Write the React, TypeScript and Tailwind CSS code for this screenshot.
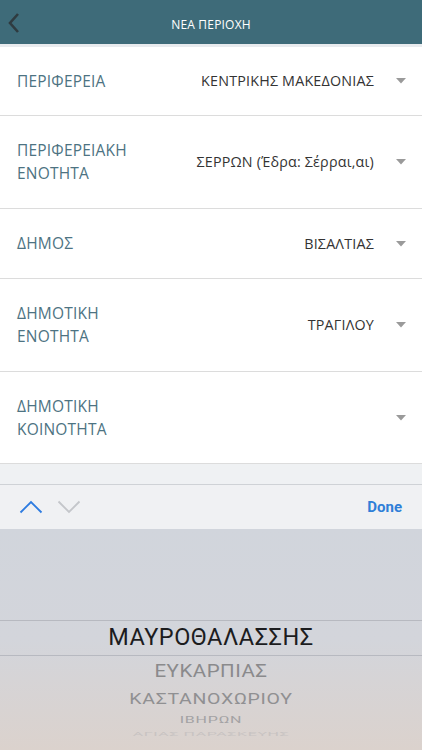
import React from 'react';

type Row = { label: string[]; value?: string; h: string };

const rows: Row[] = [
  { label: ['ΠΕΡΙΦΕΡΕΙΑ'], value: 'ΚΕΝΤΡΙΚΗΣ ΜΑΚΕΔΟΝΙΑΣ', h: 'h-[69px]' },
  { label: ['ΠΕΡΙΦΕΡΕΙΑΚΗ', 'ΕΝΟΤΗΤΑ'], value: 'ΣΕΡΡΩΝ (Έδρα: Σέρραι,αι)', h: 'h-[93px]' },
  { label: ['ΔΗΜΟΣ'], value: 'ΒΙΣΑΛΤΙΑΣ', h: 'h-[70px]' },
  { label: ['ΔΗΜΟΤΙΚΗ', 'ΕΝΟΤΗΤΑ'], value: 'ΤΡΑΓΙΛΟΥ', h: 'h-[93px]' },
  { label: ['ΔΗΜΟΤΙΚΗ', 'ΚΟΙΝΟΤΗΤΑ'], h: 'h-[92px]' },
];

const Caret = () => (
  <svg width="10" height="6" viewBox="0 0 10 6" className="shrink-0">
    <path d="M0 0 H10 L5 5.5 Z" fill="#9a9a9a" />
  </svg>
);

export default function App() {
  return (
    <div className="w-[422px] h-[750px] flex flex-col overflow-hidden bg-white font-['Open_Sans',sans-serif]">
      {/* header */}
      <div className="h-[44px] shrink-0 bg-[#3e6b79] flex items-center relative">
        <svg width="14" height="22" viewBox="0 0 14 22" className="absolute left-[7px] top-[12px]">
          <path d="M11 2 L3 11 L11 20" fill="none" stroke="#2f3b40" strokeWidth="2.6" />
        </svg>
        <div className="flex-1 text-center text-white text-[12px] font-medium tracking-[0.2px] pt-[6px]">
          ΝΕΑ ΠΕΡΙΟΧΗ
        </div>
      </div>
      <div className="h-[3px] shrink-0 bg-[#e8ebee]" />

      {/* form rows */}
      <div className="flex flex-col shrink-0">
        {rows.map((r, i) => (
          <div
            key={i}
            className={`${r.h} shrink-0 flex items-center pl-[17px] pr-[16px] border-b border-[#dcdcdc]`}
          >
            <div className="flex-1 text-[15.5px] leading-[23px] text-[#4d7382] tracking-[0.2px]">
              {r.label.map((l, j) => (
                <div key={j}>{l}</div>
              ))}
            </div>
            {r.value && (
              <div className="text-[14.3px] text-[#333333] mr-[22px] tracking-[0.2px]">{r.value}</div>
            )}
            <Caret />
          </div>
        ))}
      </div>

      <div className="h-[20px] shrink-0 bg-[#eff1f3]" />

      {/* toolbar */}
      <div className="h-[45px] shrink-0 bg-[#f0f1f3] border-t border-[#cfd2d6] flex items-center px-[19px]">
        <svg width="24" height="14" viewBox="0 0 24 14">
          <path d="M1.5 12.5 L12 2 L22.5 12.5" fill="none" stroke="#2d7be0" strokeWidth="1.8" />
        </svg>
        <svg width="24" height="14" viewBox="0 0 24 14" className="ml-[14px]">
          <path d="M1.5 1.5 L12 12 L22.5 1.5" fill="none" stroke="#c4c6ca" strokeWidth="1.8" />
        </svg>
        <div className="flex-1" />
        <div className="text-[15px] font-bold text-[#2f7fd8] mr-[1px] font-['Roboto',sans-serif]">Done</div>
      </div>

      {/* picker */}
      <div className="flex-1 flex flex-col bg-linear-to-b from-[#d1d5dc] via-[#d3d5db] to-[#dbd2cd] font-['Roboto',sans-serif]">
        <div className="h-[91px] shrink-0" />
        <div className="h-[36px] shrink-0 border-y border-[#b7b9c0] flex items-center justify-center text-[23.5px] text-[#1c1c1e] tracking-[0.5px]">
          ΜΑΥΡΟΘΑΛΑΣΣΗΣ
        </div>
        <div className="flex flex-col items-center text-[#8a8a8c]">
          <div className="h-[31px] flex items-center text-[20.5px] scale-y-[0.92] tracking-[0.5px]">ΕΥΚΑΡΠΙΑΣ</div>
          <div className="h-[24px] flex items-center text-[19.5px] scale-y-[0.78] tracking-[0.7px] text-[#909092]">
            ΚΑΣΤΑΝΟΧΩΡΙΟΥ
          </div>
          <div className="h-[18px] flex items-center text-[16px] scale-y-[0.62] tracking-[0.8px] text-[#a3a2a4]">
            ΙΒΗΡΩΝ
          </div>
          <div className="h-[10px] flex items-center text-[16px] scale-y-[0.3] tracking-[0.6px] text-[#c8c3c2]">
            ΑΓΙΑΣ ΠΑΡΑΣΚΕΥΗΣ
          </div>
        </div>
      </div>
    </div>
  );
}
